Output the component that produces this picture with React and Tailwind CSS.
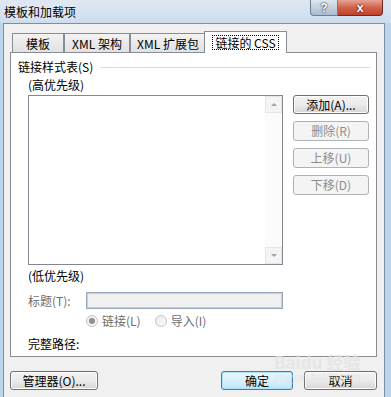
const font = "font-['Noto_Sans_CJK_SC','Liberation_Sans',sans-serif]";

function Btn({ children, disabled, focus, className = "" }) {
  const base = "flex items-center justify-center rounded-[3px] border text-[12px] leading-[14px]";
  if (disabled)
    return <div className={`${base} border-[#adb2b5] bg-[#f4f4f4] text-[#8d8d8d] ${className}`}>{children}</div>;
  if (focus)
    return (
      <div className={`${base} border-[#3c7fb1] bg-gradient-to-b from-[#eaf6fd] via-[#d9f0fc] to-[#bee6fd] shadow-[inset_0_0_0_1px_#aee0f8] ${className}`}>
        {children}
      </div>
    );
  return (
    <div className={`${base} border-[#707070] bg-gradient-to-b from-[#f2f2f2] via-[#ebebeb] to-[#d6d6d6] shadow-[inset_0_0_0_1px_#fcfcfc] ${className}`}>
      {children}
    </div>
  );
}

function Tab({ label, active, w }) {
  if (active)
    return (
      <div className={`${w} -ml-[2px] -mb-px relative z-10 flex h-[22px] items-start justify-center border border-b-0 border-[#898c95] bg-white pt-[3px]`}>
        <span className="border border-dotted border-black px-[2px] leading-[13px]">{label}</span>
      </div>
    );
  return (
    <div className={`${w} flex h-[19px] items-center justify-center border border-b-0 border-[#898c95] bg-gradient-to-b from-[#f3f3f3] to-[#e1e1e1] pt-[1px]`}>
      {label}
    </div>
  );
}

function Radio({ checked }) {
  return (
    <span className="flex h-[12px] w-[12px] items-center justify-center rounded-full border border-[#c4c4c4] bg-gradient-to-br from-[#ececec] to-[#fafafa]">
      {checked && <span className="h-[6px] w-[6px] rounded-full bg-[#8f8f8f]" />}
    </span>
  );
}

export default function App() {
  return (
    <div className={`${font} relative flex h-[397px] w-[391px] flex-col overflow-hidden bg-[#bcd4ec] text-[12px] leading-[14px] text-black`}>
      {/* title bar */}
      <div className="flex h-[23px] items-start justify-between bg-gradient-to-b from-[#dfe8f2] to-[#cbdcee]">
        <span className="pl-[4px] pt-[5px] text-[12px] leading-[14px] [text-shadow:0_0_6px_#ffffff]">模板和加载项</span>
        <div className="mr-[8px] flex">
          <div className="flex h-[16px] w-[28px] items-center justify-center rounded-bl-[4px] border border-t-0 border-[#6c7c92] bg-gradient-to-b from-[#dfe7f0] to-[#a9bbd0] font-['Liberation_Sans',sans-serif] text-[12px] font-bold leading-[14px] text-white [text-shadow:0_0_2px_#1e2a3a,0_0_1px_#1e2a3a]">
            ?
          </div>
          <div className="flex h-[16px] w-[45px] items-center justify-center rounded-br-[4px] border border-l-0 border-t-0 border-[#6b2a20] bg-gradient-to-b from-[#e8a394] via-[#d0614a] to-[#c0412a] font-['Liberation_Sans',sans-serif] text-[13px] font-bold leading-[14px] text-white [text-shadow:0_0_2px_#3a0d06,0_0_1px_#3a0d06]">
            x
          </div>
        </div>
      </div>

      {/* client */}
      <div className="flex flex-1 pl-[3px] pr-[6px]">
        <div className="flex flex-1 flex-col border-l border-r border-t border-[#7d8fa5] bg-[#f0f0f0] pl-[6px]">
          <div className="mt-[7px] flex h-[21px] items-end pl-[2px]">
            <Tab label="模板" w="w-[52px]" />
            <Tab label="XML 架构" w="w-[66px]" />
            <Tab label="XML 扩展包" w="w-[76px]" />
            <Tab label="链接的 CSS" w="w-[83px]" active />
          </div>

          <div className="flex h-[305px] w-[367px] flex-col border border-[#898c95] bg-white pl-[7px] pt-[7px]">
            <div className="flex items-center pr-[6px]">
              <span>链接样式表(S)</span>
              <div className="ml-[7px] h-px flex-1 bg-[#d5dfe5]" />
            </div>
            <div className="ml-[10px] mt-[4px]">(高优先级)</div>

            <div className="ml-[10px] mt-[3px] flex">
              <div className="flex h-[170px] w-[255px] justify-end border border-[#828790]">
                <div className="flex w-[17px] flex-col justify-between bg-[#fbfbfb]">
                  <div className="flex h-[17px] items-center justify-center border border-[#e6e6e6] bg-[#f4f4f4]">
                    <span className="h-0 w-0 border-x-[3px] border-b-[3px] border-x-transparent border-b-[#a5a5a5]" />
                  </div>
                  <div className="flex h-[17px] items-center justify-center border border-[#e6e6e6] bg-[#f4f4f4]">
                    <span className="h-0 w-0 border-x-[3px] border-t-[3px] border-x-transparent border-t-[#a5a5a5]" />
                  </div>
                </div>
              </div>
              <div className="ml-[10px] flex w-[76px] flex-col gap-[7px]">
                <Btn className="h-[19px]">添加(A)...</Btn>
                <Btn className="h-[20px]" disabled>删除(R)</Btn>
                <Btn className="h-[20px]" disabled>上移(U)</Btn>
                <Btn className="h-[20px]" disabled>下移(D)</Btn>
              </div>
            </div>

            <div className="ml-[10px] mt-[4px]">(低优先级)</div>

            <div className="ml-[10px] mt-[9px] flex items-center">
              <span className="w-[58px] text-[#6d6d6d]">标题(T):</span>
              <div className="h-[17px] w-[197px] border border-[#9aa8bb] bg-[#f0f0f0] shadow-[inset_0_0_0_1px_#b9d2ec]" />
            </div>

            <div className="ml-[68px] mt-[5px] flex items-center text-[#6d6d6d]">
              <Radio checked />
              <span className="ml-[4px]">链接(L)</span>
              <span className="ml-[14px]">
                <Radio />
              </span>
              <span className="ml-[4px]">导入(I)</span>
            </div>

            <div className="ml-[10px] mt-[9px]">完整路径:</div>
          </div>

          <div className="mt-[14px] flex pr-[7px]">
            <Btn className="h-[19px] w-[88px]">管理器(O)...</Btn>
            <div className="flex-1" />
            <Btn className="h-[19px] w-[72px]" focus>确定</Btn>
            <Btn className="ml-[11px] h-[19px] w-[73px]">取消</Btn>
          </div>
        </div>
      </div>

      {/* watermark */}
      <div className="pointer-events-none absolute left-[274px] top-[353px] flex flex-col items-start text-[#e2e2e2] opacity-70">
        <span className="text-[17px] font-bold leading-[18px]">Baidu 经验</span>
        <span className="text-[10px] leading-[12px]">jingyan.baidu.com</span>
      </div>
    </div>
  );
}
